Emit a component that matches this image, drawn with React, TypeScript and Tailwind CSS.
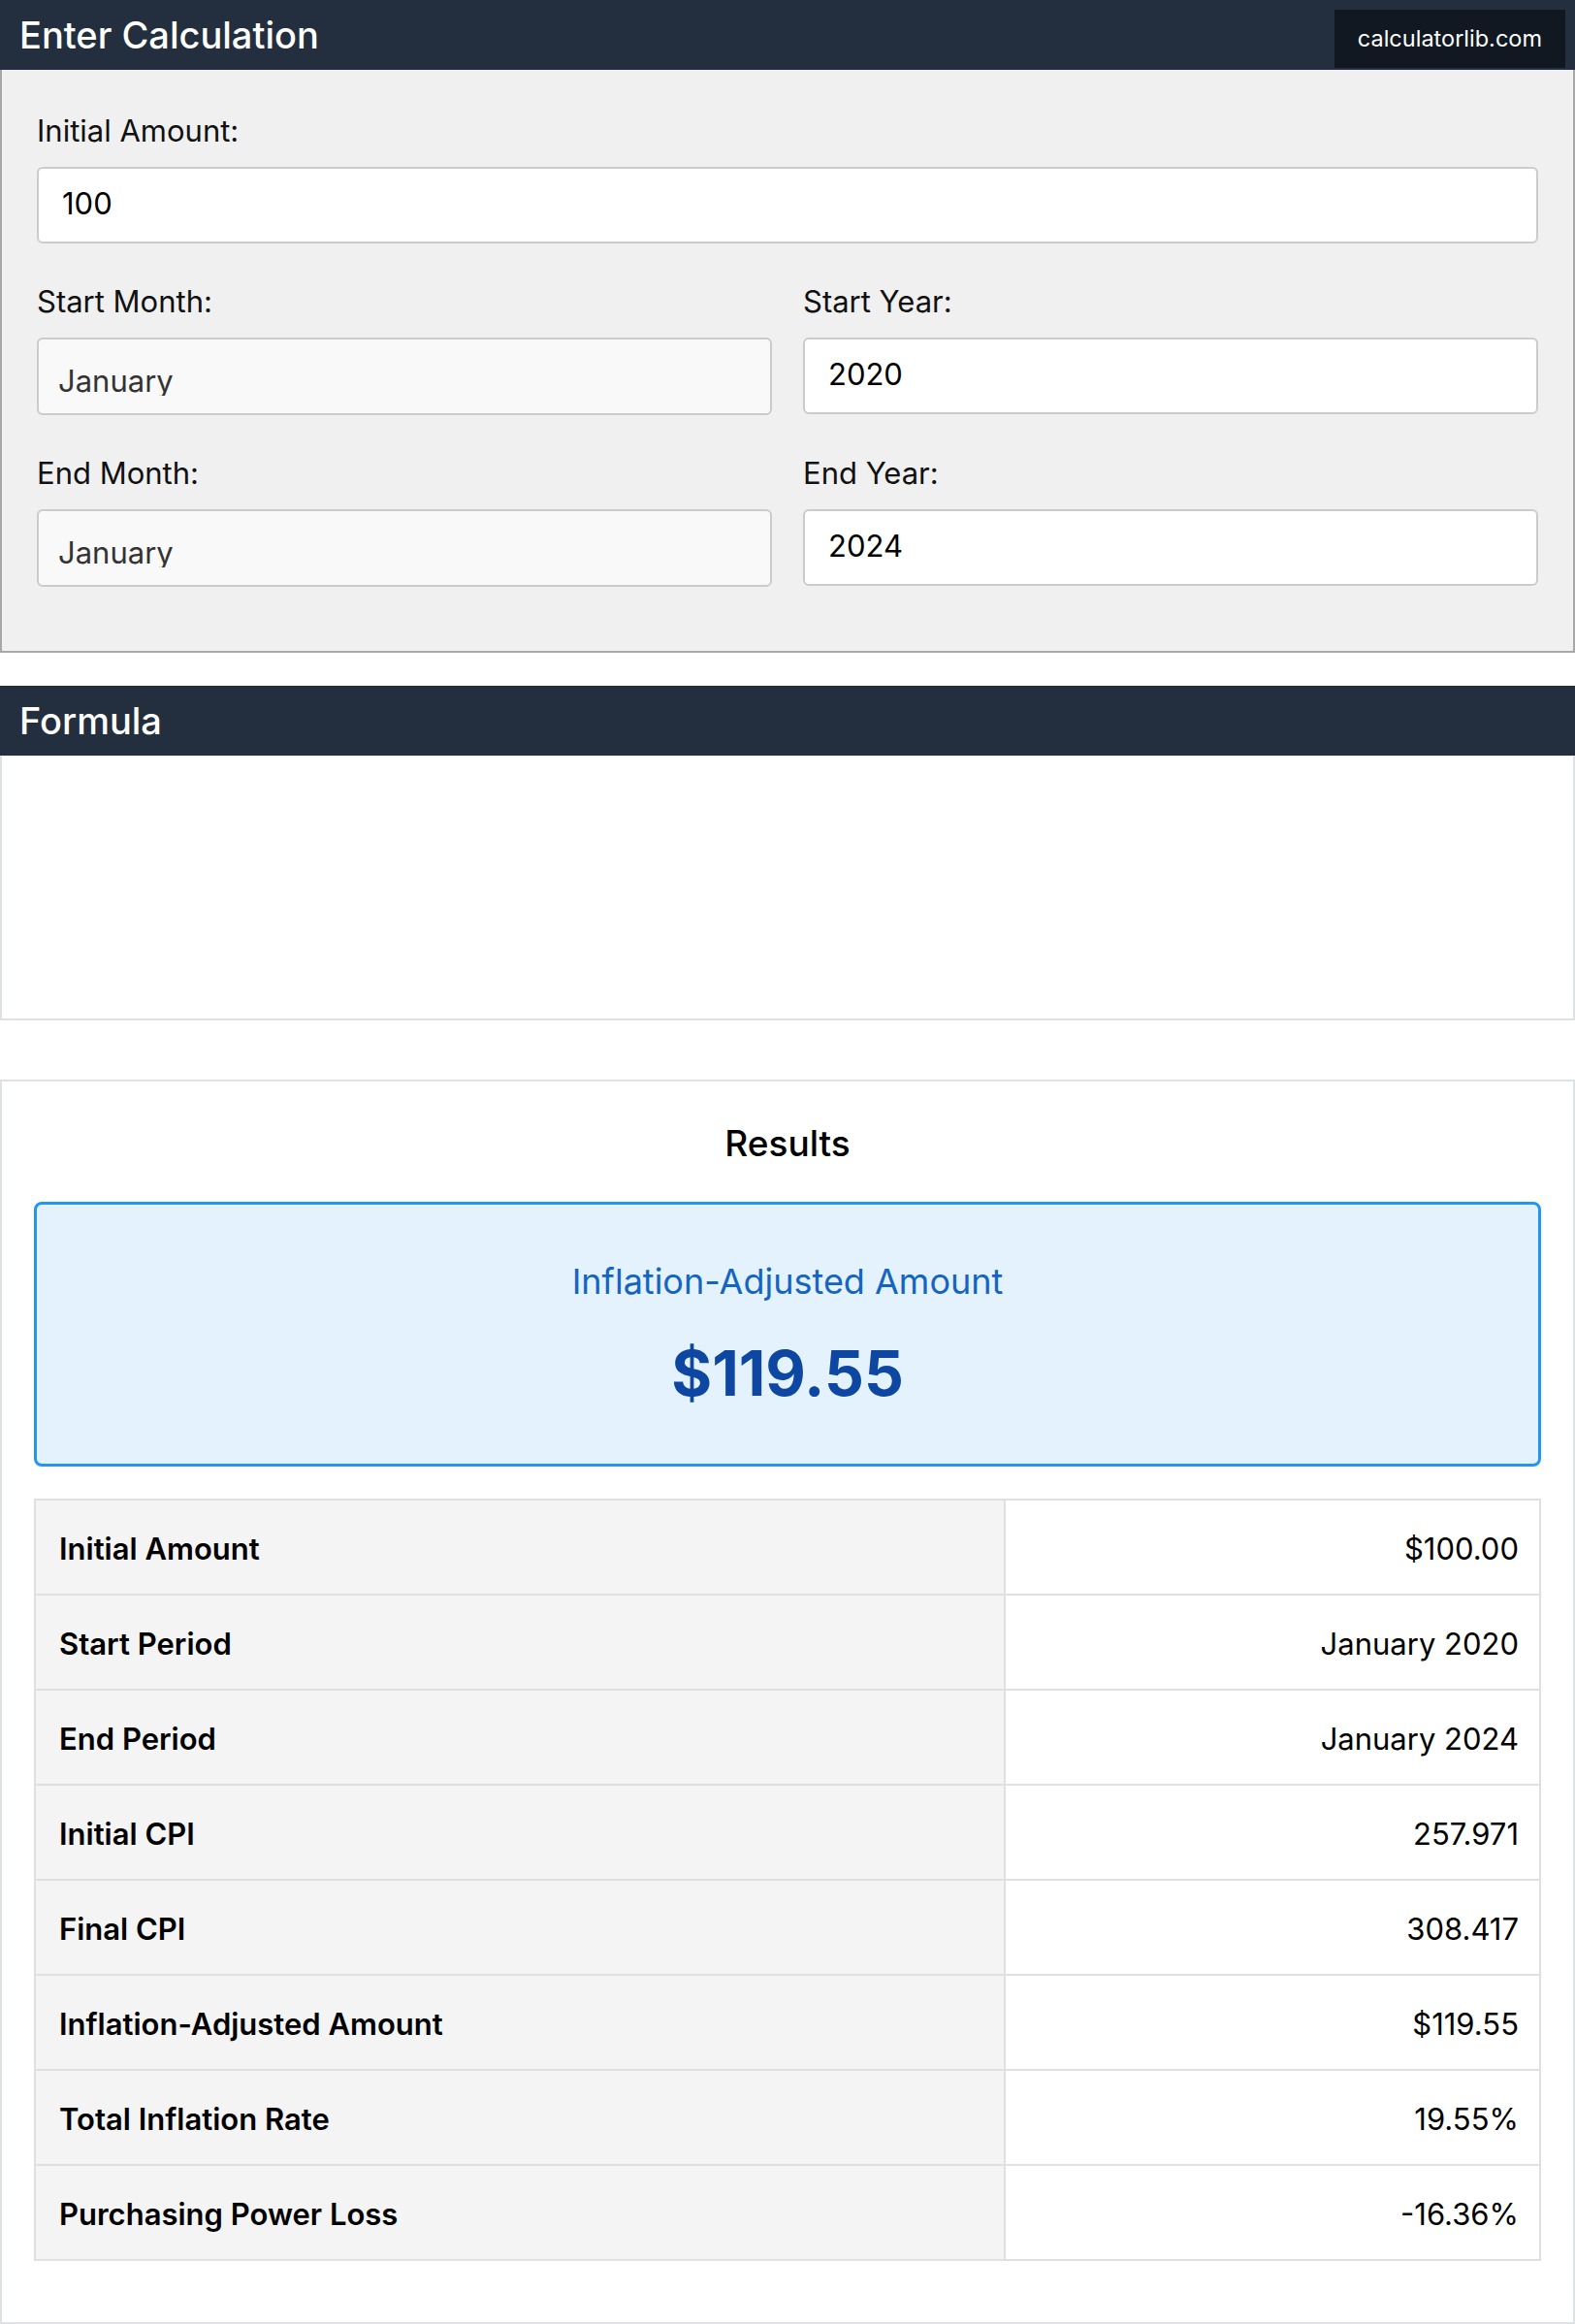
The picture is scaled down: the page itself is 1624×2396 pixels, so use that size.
import React from "react";

const rows: [string, string][] = [
  ["Initial Amount", "$100.00"],
  ["Start Period", "January 2020"],
  ["End Period", "January 2024"],
  ["Initial CPI", "257.971"],
  ["Final CPI", "308.417"],
  ["Inflation-Adjusted Amount", "$119.55"],
  ["Total Inflation Rate", "19.55%"],
  ["Purchasing Power Loss", "-16.36%"],
];

const SectionBar: React.FC<{ title: string; badge?: boolean }> = ({ title, badge }) => (
  <div className="h-[72px] bg-[#232f3e] flex items-center justify-between pl-[20px] pr-[10px]">
    <h2 className="text-[38px] font-medium text-white leading-none">{title}</h2>
    {badge && (
      <div className="self-end mb-[2px] h-[60px] bg-[#111821] px-[24px] flex items-center text-[23.5px] text-white">
        calculatorlib.com
      </div>
    )}
  </div>
);

const TextField: React.FC<{ label: string; value: string }> = ({ label, value }) => (
  <div className="flex flex-col">
    <label className="text-[31px] leading-[38px] text-[#111] mb-[18px]">{label}</label>
    <div className="h-[79px] bg-white border-2 border-[#cbcbcb] rounded-[6px] flex items-center pl-[24px] pb-[2px] text-[31px] text-black">
      {value}
    </div>
  </div>
);

const SelectField: React.FC<{ label: string; value: string }> = ({ label, value }) => (
  <div className="flex flex-col">
    <label className="text-[31px] leading-[38px] text-[#111] mb-[18px]">{label}</label>
    <div className="h-[80px] bg-[#f9f9f9] border-2 border-[#cbcbcb] rounded-[6px] pl-[20px] pt-[27px]">
      <span className="block h-[31px] leading-[32px] overflow-hidden text-[31px] text-[#333]">{value}</span>
    </div>
  </div>
);

export default function App() {
  return (
    <div className="w-[1624px] bg-white font-['Inter',sans-serif] pb-[3px]">
      <SectionBar title="Enter Calculation" badge />
      <div className="bg-[#f0f0f0] border-2 border-t-0 border-[#a8a8a8] px-[36px] pt-[44px] pb-[66px] flex flex-col gap-[41px]">
        <TextField label="Initial Amount:" value="100" />
        <div className="grid grid-cols-2 gap-x-[32px]">
          <SelectField label="Start Month:" value="January" />
          <TextField label="Start Year:" value="2020" />
        </div>
        <div className="grid grid-cols-2 gap-x-[32px]">
          <SelectField label="End Month:" value="January" />
          <TextField label="End Year:" value="2024" />
        </div>
      </div>

      <div className="mt-[34px]">
        <SectionBar title="Formula" />
        <div className="h-[273px] bg-white border-2 border-t-0 border-[#dee2e6]"></div>
      </div>

      <div className="mt-[61px] border-2 border-[#dee2e6] bg-white px-[33px] pt-[40px] pb-[63px]">
        <h3 className="text-center text-[37px] font-medium leading-[48px] text-black mb-[36px]">Results</h3>
        <div className="h-[273px] border-[3px] border-[#2196f3] bg-[#e3f2fd] rounded-[8px] flex flex-col items-center justify-center gap-[37px]">
          <div className="text-[36px] leading-[44px] text-[#1565c0]">Inflation-Adjusted Amount</div>
          <div className="text-[64px] leading-[72px] font-bold text-[#0d47a1]">$119.55</div>
        </div>
        <table className="mt-[33px] w-full border-collapse">
          <tbody>
            {rows.map(([label, value]) => (
              <tr key={label} className="h-[98px]">
                <td className="w-[1000px] bg-[#f4f4f4] border-2 border-[#e0e0e0] pl-[24px] pt-[5px] text-[31px] font-semibold text-black">
                  {label}
                </td>
                <td className="bg-white border-2 border-[#e0e0e0] pr-[21px] pt-[5px] text-right text-[31px] text-black">
                  {value}
                </td>
              </tr>
            ))}
          </tbody>
        </table>
      </div>
    </div>
  );
}
